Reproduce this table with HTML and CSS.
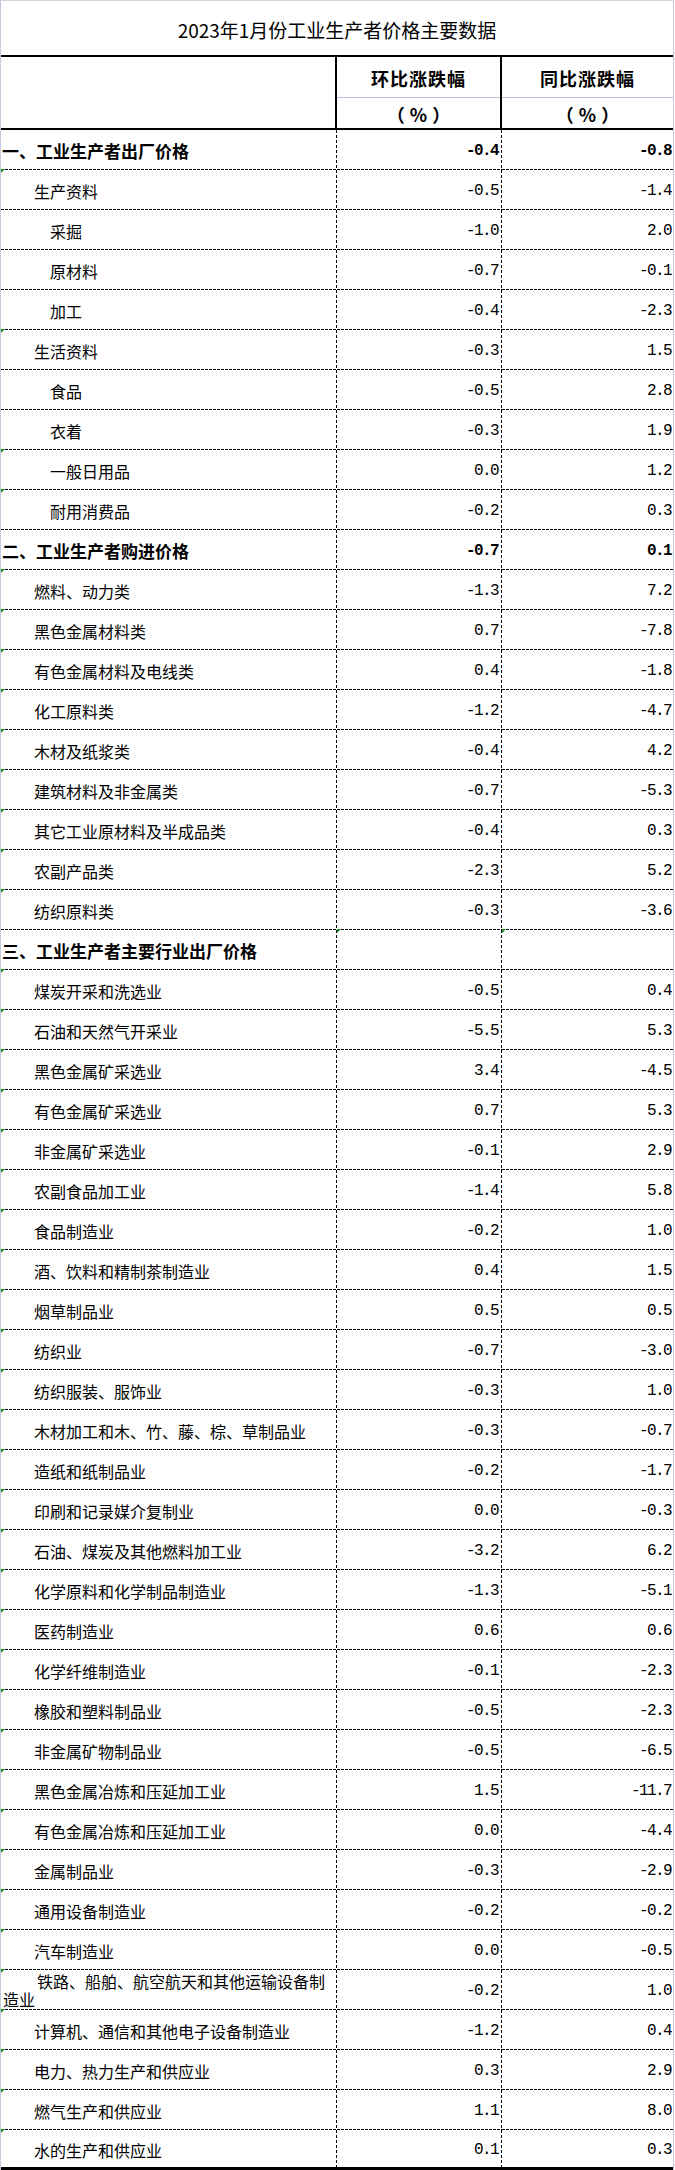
FILE: index.html
```html
<!DOCTYPE html>
<html lang="zh-CN">
<head>
<meta charset="utf-8">
<title>2023年1月份工业生产者价格主要数据</title>
<link rel="stylesheet" href="styles.css">
</head>
<body>
<div class="sheet">
  <div class="title">2023年1月份工业生产者价格主要数据</div>
  <div class="head">
    <div class="h-blank"></div>
    <div class="h-col h-mid">
      <div class="h-top">环比涨跌幅</div>
      <div class="h-bot">（%）</div>
    </div>
    <div class="h-col">
      <div class="h-top">同比涨跌幅</div>
      <div class="h-bot">（%）</div>
    </div>
  </div>

  <div class="row sec"><div class="name">一、工业生产者出厂价格</div><div class="num mid">-0.4</div><div class="num">-0.8</div></div>
  <div class="row"><div class="name l1 flag">生产资料</div><div class="num mid">-0.5</div><div class="num">-1.4</div></div>
  <div class="row"><div class="name l2">采掘</div><div class="num mid">-1.0</div><div class="num">2.0</div></div>
  <div class="row"><div class="name l2">原材料</div><div class="num mid">-0.7</div><div class="num">-0.1</div></div>
  <div class="row"><div class="name l2">加工</div><div class="num mid">-0.4</div><div class="num">-2.3</div></div>
  <div class="row"><div class="name l1 flag">生活资料</div><div class="num mid">-0.3</div><div class="num">1.5</div></div>
  <div class="row"><div class="name l2">食品</div><div class="num mid">-0.5</div><div class="num">2.8</div></div>
  <div class="row"><div class="name l2">衣着</div><div class="num mid">-0.3</div><div class="num">1.9</div></div>
  <div class="row"><div class="name l2 flag">一般日用品</div><div class="num mid">0.0</div><div class="num">1.2</div></div>
  <div class="row"><div class="name l2 flag">耐用消费品</div><div class="num mid">-0.2</div><div class="num">0.3</div></div>
  <div class="row sec"><div class="name">二、工业生产者购进价格</div><div class="num mid">-0.7</div><div class="num">0.1</div></div>
  <div class="row"><div class="name l1 flag">燃料、动力类</div><div class="num mid">-1.3</div><div class="num">7.2</div></div>
  <div class="row"><div class="name l1 flag">黑色金属材料类</div><div class="num mid">0.7</div><div class="num">-7.8</div></div>
  <div class="row"><div class="name l1 flag">有色金属材料及电线类</div><div class="num mid">0.4</div><div class="num">-1.8</div></div>
  <div class="row"><div class="name l1 flag">化工原料类</div><div class="num mid">-1.2</div><div class="num">-4.7</div></div>
  <div class="row"><div class="name l1 flag">木材及纸浆类</div><div class="num mid">-0.4</div><div class="num">4.2</div></div>
  <div class="row"><div class="name l1 flag">建筑材料及非金属类</div><div class="num mid">-0.7</div><div class="num">-5.3</div></div>
  <div class="row"><div class="name l1 flag">其它工业原材料及半成品类</div><div class="num mid">-0.4</div><div class="num">0.3</div></div>
  <div class="row"><div class="name l1 flag">农副产品类</div><div class="num mid">-2.3</div><div class="num">5.2</div></div>
  <div class="row"><div class="name l1 flag">纺织原料类</div><div class="num mid">-0.3</div><div class="num">-3.6</div></div>
  <div class="row sec"><div class="name">三、工业生产者主要行业出厂价格</div><div class="num mid flag"></div><div class="num flag"></div></div>
  <div class="row"><div class="name l1 flag">煤炭开采和洗选业</div><div class="num mid">-0.5</div><div class="num">0.4</div></div>
  <div class="row"><div class="name l1 flag">石油和天然气开采业</div><div class="num mid">-5.5</div><div class="num">5.3</div></div>
  <div class="row"><div class="name l1 flag">黑色金属矿采选业</div><div class="num mid">3.4</div><div class="num">-4.5</div></div>
  <div class="row"><div class="name l1 flag">有色金属矿采选业</div><div class="num mid">0.7</div><div class="num">5.3</div></div>
  <div class="row"><div class="name l1 flag">非金属矿采选业</div><div class="num mid">-0.1</div><div class="num">2.9</div></div>
  <div class="row"><div class="name l1 flag">农副食品加工业</div><div class="num mid">-1.4</div><div class="num">5.8</div></div>
  <div class="row"><div class="name l1 flag">食品制造业</div><div class="num mid">-0.2</div><div class="num">1.0</div></div>
  <div class="row"><div class="name l1 flag">酒、饮料和精制茶制造业</div><div class="num mid">0.4</div><div class="num">1.5</div></div>
  <div class="row"><div class="name l1 flag">烟草制品业</div><div class="num mid">0.5</div><div class="num">0.5</div></div>
  <div class="row"><div class="name l1 flag">纺织业</div><div class="num mid">-0.7</div><div class="num">-3.0</div></div>
  <div class="row"><div class="name l1 flag">纺织服装、服饰业</div><div class="num mid">-0.3</div><div class="num">1.0</div></div>
  <div class="row"><div class="name l1 flag">木材加工和木、竹、藤、棕、草制品业</div><div class="num mid">-0.3</div><div class="num">-0.7</div></div>
  <div class="row"><div class="name l1 flag">造纸和纸制品业</div><div class="num mid">-0.2</div><div class="num">-1.7</div></div>
  <div class="row"><div class="name l1 flag">印刷和记录媒介复制业</div><div class="num mid">0.0</div><div class="num">-0.3</div></div>
  <div class="row"><div class="name l1 flag">石油、煤炭及其他燃料加工业</div><div class="num mid">-3.2</div><div class="num">6.2</div></div>
  <div class="row"><div class="name l1 flag">化学原料和化学制品制造业</div><div class="num mid">-1.3</div><div class="num">-5.1</div></div>
  <div class="row"><div class="name l1 flag">医药制造业</div><div class="num mid">0.6</div><div class="num">0.6</div></div>
  <div class="row"><div class="name l1 flag">化学纤维制造业</div><div class="num mid">-0.1</div><div class="num">-2.3</div></div>
  <div class="row"><div class="name l1 flag">橡胶和塑料制品业</div><div class="num mid">-0.5</div><div class="num">-2.3</div></div>
  <div class="row"><div class="name l1 flag">非金属矿物制品业</div><div class="num mid">-0.5</div><div class="num">-6.5</div></div>
  <div class="row"><div class="name l1 flag">黑色金属冶炼和压延加工业</div><div class="num mid">1.5</div><div class="num">-11.7</div></div>
  <div class="row"><div class="name l1 flag">有色金属冶炼和压延加工业</div><div class="num mid">0.0</div><div class="num">-4.4</div></div>
  <div class="row"><div class="name l1 flag">金属制品业</div><div class="num mid">-0.3</div><div class="num">-2.9</div></div>
  <div class="row"><div class="name l1 flag">通用设备制造业</div><div class="num mid">-0.2</div><div class="num">-0.2</div></div>
  <div class="row"><div class="name l1 flag">汽车制造业</div><div class="num mid">0.0</div><div class="num">-0.5</div></div>
  <div class="row"><div class="name wrap flag"><span class="wrap-first">铁路、船舶、航空航天和其他运输设备制</span><span class="wrap-second">造业</span></div><div class="num mid">-0.2</div><div class="num">1.0</div></div>
  <div class="row"><div class="name l1 flag">计算机、通信和其他电子设备制造业</div><div class="num mid">-1.2</div><div class="num">0.4</div></div>
  <div class="row"><div class="name l1 flag">电力、热力生产和供应业</div><div class="num mid">0.3</div><div class="num">2.9</div></div>
  <div class="row"><div class="name l1 flag">燃气生产和供应业</div><div class="num mid">1.1</div><div class="num">8.0</div></div>
  <div class="row last"><div class="name l1 flag">水的生产和供应业</div><div class="num mid">0.1</div><div class="num">0.3</div></div>
</div>
</body>
</html>
```

FILE: styles.css
```css
* {
  box-sizing: border-box;
  margin: 0;
  padding: 0;
}

html, body {
  background: #ffffff;
}

body {
  width: 675px;
  height: 2170px;
  overflow: hidden;
  font-family: "Noto Sans CJK SC", "Noto Sans", sans-serif;
  color: #000000;
}

.sheet {
  width: 674px;
  border-left: 1px solid #c3cbdc;
  border-right: 1px solid #c3cbdc;
  border-top: 1px solid #d2d6de;
}

.title {
  height: 56px;
  border-bottom: 2px solid #000000;
  display: flex;
  align-items: center;
  justify-content: center;
  padding-top: 3px;
  font-size: 19px;
  line-height: 1;
}

.head {
  display: grid;
  grid-template-columns: 336px 165px 171px;
  height: 73px;
  border-bottom: 2px solid #000000;
}

.h-blank {
  border-right: 2px solid #000000;
}

.h-col {
  display: flex;
  flex-direction: column;
}

.h-mid {
  border-right: 2px solid #000000;
}

.h-top {
  height: 41px;
  border-bottom: 1px solid #b8c2d6;
  display: flex;
  align-items: center;
  justify-content: center;
  padding-top: 2px;
  font-size: 18px;
  font-weight: bold;
  letter-spacing: 1px;
  line-height: 1;
}

.h-bot {
  flex: 1;
  display: flex;
  align-items: center;
  justify-content: center;
  padding-top: 1px;
  padding-left: 5px;
  font-size: 18px;
  font-weight: bold;
  letter-spacing: 5px;
  line-height: 1;
}

.row {
  display: grid;
  grid-template-columns: 336px 165px 171px;
  height: 40px;
}

.row > div {
  position: relative;
  display: flex;
  align-items: center;
  padding-top: 2px;
  padding-bottom: 1px;
  line-height: 1;
  background-image: repeating-linear-gradient(to right, #000000 0 3px, transparent 3px 4px);
  background-size: 100% 1px;
  background-position: left bottom;
  background-repeat: no-repeat;
}

.row > .name,
.row > .num.mid {
  background-image:
    repeating-linear-gradient(to right, #000000 0 3px, transparent 3px 4px),
    repeating-linear-gradient(to bottom, #000000 0 3px, transparent 3px 5px);
  background-size: 100% 1px, 1px 100%;
  background-position: left bottom, right top;
  background-repeat: no-repeat, no-repeat;
}

.name {
  padding-left: 1px;
  font-size: 16px;
  white-space: nowrap;
}

.row > .l1 {
  padding-left: 33px;
}

.row > .l2 {
  padding-left: 49px;
}

.sec .name {
  font-size: 17px;
  font-weight: bold;
}

.num {
  justify-content: flex-end;
  font-family: "Liberation Mono", "DejaVu Sans Mono", monospace;
  font-size: 16px;
  letter-spacing: -1.6px;
}

.row > .num {
  padding-right: 2px;
}

.row > .num.mid {
  padding-right: 4px;
}

.sec .num {
  font-weight: bold;
}

.row > .wrap {
  flex-direction: column;
  align-items: flex-start;
  justify-content: flex-end;
  padding-top: 0;
  padding-bottom: 2px;
  line-height: 18px;
}

.wrap-first {
  padding-left: 35px;
}

.wrap-second {
  padding-left: 1px;
}

.row.last > div,
.row.last > .name,
.row.last > .num.mid {
  background-image:
    linear-gradient(#000000, #000000),
    repeating-linear-gradient(to bottom, #000000 0 3px, transparent 3px 5px);
  background-size: 100% 3px, 1px 100%;
  background-position: left bottom, right top;
  background-repeat: no-repeat, no-repeat;
  padding-bottom: 3px;
}

.row.last > .num:not(.mid) {
  background-image: linear-gradient(#000000, #000000);
  background-size: 100% 3px;
  background-position: left bottom;
  background-repeat: no-repeat;
}

.flag::before {
  content: "";
  position: absolute;
  top: -1px;
  left: 0;
  width: 0;
  height: 0;
  border-top: 4px solid #1a8a1a;
  border-right: 4px solid transparent;
}
```
